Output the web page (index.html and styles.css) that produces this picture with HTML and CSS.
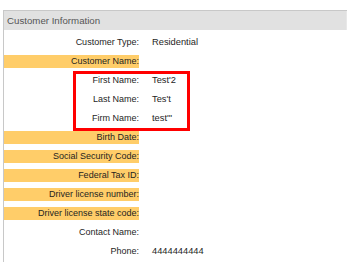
FILE: index.html
```html
<!DOCTYPE html>
<html lang="en">
<head>
    <meta charset="UTF-8">
    <title>Customer Information</title>
    <link rel="stylesheet" href="styles.css">
</head>
<body>
    <div class="panel">
        <div class="panel-header">Customer Information</div>
        <div class="panel-body">
            <table class="info">
                <tr><td class="lbl">Customer Type:</td><td class="val">Residential</td></tr>
                <tr><td class="lbl req">Customer Name:</td><td class="val"></td></tr>
                <tr><td class="lbl">First Name:</td><td class="val">Test'2</td></tr>
                <tr><td class="lbl">Last Name:</td><td class="val">Tes't</td></tr>
                <tr><td class="lbl">Firm Name:</td><td class="val">test'"</td></tr>
                <tr><td class="lbl req">Birth Date:</td><td class="val"></td></tr>
                <tr><td class="lbl req">Social Security Code:</td><td class="val"></td></tr>
                <tr><td class="lbl req">Federal Tax ID:</td><td class="val"></td></tr>
                <tr><td class="lbl req">Driver license number:</td><td class="val"></td></tr>
                <tr><td class="lbl req">Driver license state code:</td><td class="val"></td></tr>
                <tr><td class="lbl">Contact Name:</td><td class="val"></td></tr>
                <tr><td class="lbl">Phone:</td><td class="val">4444444444</td></tr>
            </table>
            <!-- highlight around the name fields -->
            <div class="mark"></div>
        </div>
    </div>
</body>
</html>
```

FILE: styles.css
```css
body {
    margin: 0;
    padding: 10px 0 0 3px;
    font-family: "Liberation Sans", Arial, sans-serif;
    font-size: 9px;
    color: #1e1e1e;
    background: #fff;
}
.panel {
    border-left: 1px solid #c8c8c8;
    border-top: 1px solid #c8c8c8;
    min-height: 260px;
}
.panel-header {
    background-color: #e1e1e1;
    color: #555;
    font-size: 9.7px;
    height: 19px;
    line-height: 19px;
    padding-left: 3px;
    border-right: 1px solid #e8e8e8;
}
.panel-body {
    position: relative;
}
.info {
    border-collapse: separate;
    border-spacing: 0 6px;
}
.info td {
    height: 13px;
    line-height: 13px;
    padding: 0;
    white-space: nowrap;
}
.lbl {
    width: 135px;
    text-align: right;
}
.lbl.req {
    background-color: #ffcd69;
}
.val {
    padding-left: 13px !important;
    font-size: 9.3px;
}
.mark {
    position: absolute;
    left: 69px;
    top: 41px;
    width: 111px;
    height: 54px;
    border: 3px solid #f00;
}
```
